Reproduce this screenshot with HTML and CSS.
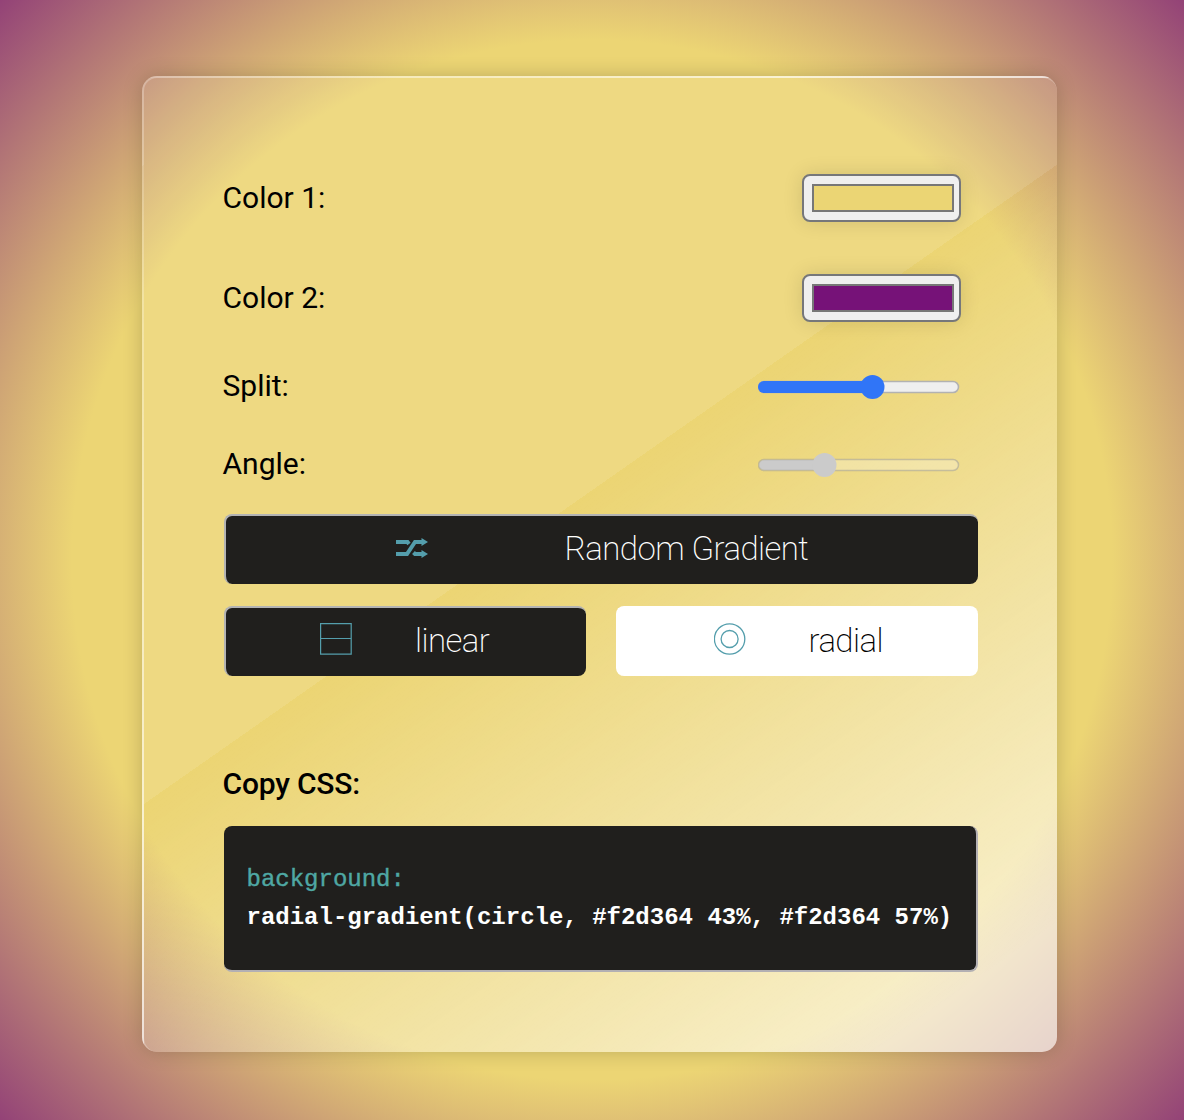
FILE: index.html
```html
<!DOCTYPE html>
<html lang="en">
<head>
<meta charset="utf-8">
<title>Gradient Generator</title>
<link rel="stylesheet" href="styles.css">
</head>
<body>
<main class="card">
  <div class="row row-color"><span class="label">Color 1:</span><div class="picker"><div class="swatch swatch-one"></div></div></div>
  <div class="row row-color"><span class="label">Color 2:</span><div class="picker"><div class="swatch swatch-two"></div></div></div>
  <div class="row row-range"><span class="label">Split:</span>
    <svg class="slider" width="202" height="26" viewBox="0.5 0 202 26"><rect x="1" y="7.5" width="200" height="11" rx="5.5" fill="#efefef" stroke="#b2b2b2" stroke-width="1.6"/><path d="M115 7H6.500a6 6 0 0 0 0 12H115z" fill="#3075f7"/><circle cx="115" cy="13" r="12" fill="#3075f7"/></svg>
  </div>
  <div class="row row-range"><span class="label">Angle:</span>
    <svg class="slider" width="202" height="26" viewBox="0.5 0 202 26"><rect x="1" y="7.5" width="200" height="11" rx="5.5" fill="#fff" fill-opacity=".25"/><path d="M67 8H6.500a5 5 0 0 0 0 10H67z" fill="#cbcbcb"/><rect x="1" y="7.5" width="200" height="11" rx="5.5" fill="none" stroke="#999" stroke-opacity=".5" stroke-width="1.5"/><circle cx="67" cy="13" r="12" fill="#cbcbcb"/></svg>
  </div>
  <div class="button random">
    <svg class="icon" width="32" height="20" viewBox="0 0 32 20"><g fill="none" stroke="#549eac" stroke-width="4"><path d="M0 4H11.500L13 6M0 16H11L19 4H27M17.500 14.500L19 16H27"/></g><path d="M25.500 0L32 4L25.500 8zM25.500 12L32 16L25.500 20z" fill="#549eac"/></svg>
    <span>Random Gradient</span>
  </div>
  <div class="modes">
    <div class="button linear">
      <svg class="icon" width="32" height="32" viewBox="0 0 32 32"><path d="M.6.600H31.200V31.200H.600zM.600 15.500H31.200" fill="none" stroke="#549eac" stroke-width="1.2"/></svg>
      <span>linear</span>
    </div>
    <div class="button radial">
      <svg class="icon" width="32" height="32" viewBox="0 0 32 32"><g fill="none" stroke="#549eac" stroke-width="1.3"><circle cx="15.6" cy="16" r="15.200"/><circle cx="15.6" cy="16" r="8.500"/></g></svg>
      <span>radial</span>
    </div>
  </div>
  <h2 class="copy-title">Copy CSS:</h2>
  <div class="code"><div class="prop">background:</div><div>radial-gradient(circle, #f2d364 43%, #f2d364 57%)</div></div>
</main>
</body>
</html>
```
FILE: styles.css
```css
* { box-sizing: border-box; }
body {
  margin: 0;
  height: 1120px;
  padding: 76px 0 0 142px;
  overflow: hidden;
  font-family: Roboto, sans-serif;
  color: #000;
  background: radial-gradient(circle, #ecd574 520px, #761278 912px);
}
.card {
  width: 915.4px;
  height: 976px;
  padding: 70px 79.9px 0 79.5px;
  border: solid rgba(255, 255, 255, .25);
  border-width: 2px 0 0 2px;
  border-radius: 15px;
  background: linear-gradient(145deg, rgba(255, 255, 255, .1) 45%, rgba(255, 255, 255, 0) 45%, rgba(255, 255, 255, .63) 92%);
  box-shadow: 0 0 20px rgba(0, 0, 0, .2);
}
.row { display: flex; align-items: center; justify-content: space-between; }
.row-color { height: 100px; padding-right: 16.5px; }
.row-range { height: 78px; padding-right: 18px; }
.label { font-size: 30px; line-height: 36px; margin-left: -1px; }
.row-range .label { padding-bottom: 2px; }
.picker {
  width: 159.5px;
  height: 48px;
  padding: 8px 5.5px 8px 8px;
  border: 2px solid #76777a;
  border-radius: 8px;
  background: #efefef;
  box-shadow: 0 0 20px rgba(0, 0, 0, .12);
}
.swatch { height: 28px; border: 2px solid #777; }
.swatch-one { background: #ebd574; }
.swatch-two { background: #761278; }
.slider { display: block; }
.button {
  display: flex;
  align-items: center;
  height: 70px;
  border: solid #b3b3b3;
  border-width: 2px 0 0 2px;
  border-radius: 8px;
  background: #201f1d;
  color: #fff;
  font-size: 33px;
  letter-spacing: -.55px;
  font-weight: 200;
  line-height: 40px;
}
.button span { padding-bottom: 2px; }
.icon { display: block; flex: none; }
.random { margin-top: 10px; padding-left: 170px; gap: 137px; }
.random .icon { margin-top: -4px; }
.modes { display: grid; grid-template-columns: 362px 362px; column-gap: 30px; margin-top: 22px; }
.linear { padding-left: 94.5px; gap: 63px; }
.radial { padding-left: 96px; gap: 63px; background: #fff; border-color: #fff; color: #000; }
.modes .icon { margin-top: -7px; }
.copy-title { margin: 90px 0 0 -1px; font-size: 30px; line-height: 36px; font-weight: 500; letter-spacing: -.2px; }
.code {
  height: 146px;
  margin-top: 24px;
  padding: 35px 0 0 23px;
  border: solid #b3b0b3;
  border-width: 0 2px 2px 0;
  border-radius: 8px;
  background: #201f1d;
  color: #fff;
  font: bold 24px/38px "Liberation Mono", monospace;
  white-space: nowrap;
}
.prop { color: #4fa8a4; font-weight: 400; -webkit-text-stroke: .4px #4fa8a4; }
```
